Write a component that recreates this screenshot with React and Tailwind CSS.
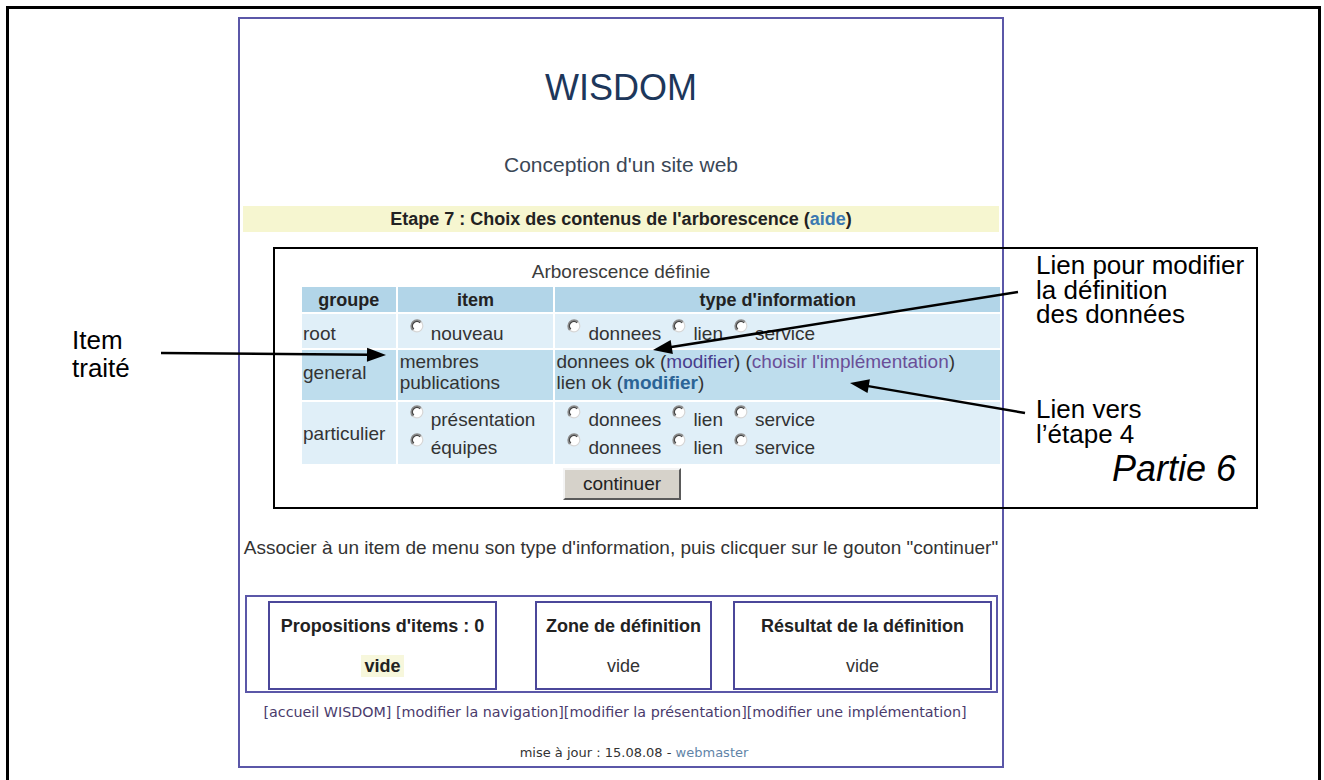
import React from "react";

const Radio = () => (
  <svg width="14" height="14" viewBox="0 0 14 14" className="inline-block ml-[11px] mr-[7px] align-[7px]">
    <circle cx="7" cy="7" r="6" fill="#ffffff" />
    <path d="M11.24 2.76 A6 6 0 0 0 2.76 11.24" fill="none" stroke="#8c8c8c" strokeWidth="1.6" />
    <path d="M10.2 3.8 A4.5 4.5 0 0 0 3.8 10.2" fill="none" stroke="#454545" strokeWidth="1.4" />
    <path d="M2.76 11.24 A6 6 0 0 0 11.24 2.76" fill="none" stroke="#d6d6d6" strokeWidth="1.2" />
  </svg>
);

function Arrow({ x1, y1, x2, y2 }) {
  const dx = x2 - x1;
  const dy = y2 - y1;
  const len = Math.hypot(dx, dy);
  const ux = dx / len;
  const uy = dy / len;
  const hl = 19;
  const hw = 7;
  const bx = x2 - ux * hl;
  const by = y2 - uy * hl;
  const px = -uy;
  const py = ux;
  return (
    <g>
      <line x1={x1} y1={y1} x2={bx + ux * 2} y2={by + uy * 2} stroke="#000" strokeWidth="2.5" />
      <polygon
        points={`${x2},${y2} ${bx + px * hw},${by + py * hw} ${bx - px * hw},${by - py * hw}`}
        fill="#000"
      />
    </g>
  );
}

export default function App() {
  return (
    <div className="relative w-[1324px] h-[780px] overflow-hidden bg-white font-['Liberation_Sans',Arial,sans-serif] text-[#333]">
      <div className="ml-[6px] mt-[6px] w-[1315px] h-[820px] border-[3px] border-b-0 border-black pl-[229px] pt-[8px]">
        <div className="w-[766px] h-[751px] border-2 border-[#5b57a8] bg-white flex flex-col">
          <div className="mt-[50.5px] h-[36px] leading-[36px] text-[36px] text-center text-[#1d375b]">WISDOM</div>
          <div className="mt-[47px] h-[24px] leading-[24px] text-[21px] text-center text-[#3a4756]">
            Conception d'un site web
          </div>
          <div className="mt-[29.6px] mx-[3px] h-[26px] leading-[26px] bg-[#f6f6d0] text-center text-[18px] font-bold text-[#222]">
            Etape 7 : Choix des contenus de l'arborescence (<span className="text-[#3b78b0]">aide</span>)
          </div>
          <div className="mt-[29.4px] h-[22px] leading-[22px] text-[19px] text-center text-[#3c3c3c]">
            Arborescence définie
          </div>
          <table className="mt-[1.6px] ml-[60px] border-separate border-spacing-[2px] text-[19px] text-[#333]">
            <tbody>
              <tr className="h-[25px] bg-[#b2d5e8]">
                <th className="w-[86px] p-0 align-middle leading-[20px] text-[18px] font-bold text-[#222]">groupe</th>
                <th className="w-[143px] p-0 align-middle leading-[20px] text-[18px] font-bold text-[#222]">item</th>
                <th className="w-[408px] p-0 align-middle leading-[20px] text-[18px] font-bold text-[#222]">type d'information</th>
              </tr>
              <tr className="h-[34px] bg-[#e0eff8]">
                <td className="px-[1px] pt-[5px] pb-0 align-top leading-[29px]">root</td>
                <td className="px-[1px] pt-[5px] pb-0 align-top leading-[29px] whitespace-nowrap">
                  <Radio />nouveau
                </td>
                <td className="px-[1px] pt-[5px] pb-0 align-top leading-[29px] whitespace-nowrap">
                  <Radio />donnees<Radio />lien<Radio />service
                </td>
              </tr>
              <tr className="h-[50px] bg-[#bedded]">
                <td className="px-[1px] pt-0 pb-[6px] align-middle leading-[21px]">general</td>
                <td className="px-[2px] pt-0 pb-[6px] align-middle leading-[21px]">
                  <div>membres</div>
                  <div>publications</div>
                </td>
                <td className="px-[1px] pt-0 pb-[6px] align-middle leading-[21px] whitespace-nowrap">
                  <div>
                    donnees ok (<span className="text-[#483d8e]">modifier</span>) (
                    <span className="text-[#6a4f98]">choisir l'implémentation</span>)
                  </div>
                  <div>
                    lien ok (<span className="text-[#2b6496] font-bold">modifier</span>)
                  </div>
                </td>
              </tr>
              <tr className="h-[62px] bg-[#e0eff8]">
                <td className="px-[1px] py-0 align-middle leading-[23px]">particulier</td>
                <td className="px-[1px] pt-[3px] pb-0 align-top leading-[27px] whitespace-nowrap">
                  <div>
                    <Radio />présentation
                  </div>
                  <div>
                    <Radio />équipes
                  </div>
                </td>
                <td className="px-[1px] pt-[3px] pb-0 align-top leading-[27px] whitespace-nowrap">
                  <div>
                    <Radio />donnees<Radio />lien<Radio />service
                  </div>
                  <div>
                    <Radio />donnees<Radio />lien<Radio />service
                  </div>
                </td>
              </tr>
            </tbody>
          </table>
          <div className="mt-[2px] ml-[323px] w-[118px] h-[32px] bg-[#d6d2ca] border-2 border-t-[#f4f4f4] border-l-[#f4f4f4] border-r-[#5a5a5a] border-b-[#5a5a5a] flex items-center justify-center text-[19px] text-[#222] leading-[22px]">
            continuer
          </div>
          <div className="mt-[36.6px] h-[22px] leading-[22px] text-[19px] text-center text-[#333] whitespace-nowrap">
            Associer à un item de menu son type d'information, puis clicquer sur le gouton "continuer"
          </div>
          <div className="mt-[36.4px] ml-[5px] w-[753px] h-[98px] border-2 border-[#5b57a8] flex items-start pt-[4px] pl-[21px]">
            <div className="w-[229px] h-[89px] border-2 border-[#4b479a] flex flex-col items-center pt-[11.5px]">
              <div className="h-[22px] leading-[22px] text-[18px] font-bold text-[#222] whitespace-nowrap">Propositions d'items : 0</div>
              <div className="mt-[18px] h-[22px] leading-[22px] text-[18px] font-bold text-[#222] bg-[#f7f7dc] px-[3px]">vide</div>
            </div>
            <div className="ml-[38px] w-[177px] h-[89px] border-2 border-[#4b479a] flex flex-col items-center pt-[11.5px]">
              <div className="h-[22px] leading-[22px] text-[18px] font-bold text-[#222] whitespace-nowrap">Zone de définition</div>
              <div className="mt-[18px] h-[22px] leading-[22px] text-[18px] text-[#333]">vide</div>
            </div>
            <div className="ml-[21px] w-[259px] h-[89px] border-2 border-[#4b479a] flex flex-col items-center pt-[11.5px]">
              <div className="h-[22px] leading-[22px] text-[18px] font-bold text-[#222] whitespace-nowrap">Résultat de la définition</div>
              <div className="mt-[18px] h-[22px] leading-[22px] text-[18px] text-[#333]">vide</div>
            </div>
          </div>
          <div className="mt-[11px] pr-[12px] h-[17px] leading-[17px] text-[14.3px] text-center text-[#4a3b6c] font-['DejaVu_Sans',Verdana,sans-serif] whitespace-nowrap">
            [accueil WISDOM] [modifier la navigation][modifier la présentation][modifier une implémentation]
          </div>
          <div className="mt-[23.5px] pl-[26px] h-[16px] leading-[16px] text-[13px] text-center text-[#333] font-['DejaVu_Sans',Verdana,sans-serif] whitespace-nowrap">
            mise à jour : 15.08.08 - <span className="text-[#5f84a8]">webmaster</span>
          </div>
        </div>
      </div>

      {/* annotations */}
      <div className="absolute left-[273px] top-[247px] w-[985px] h-[262px] border-2 border-black pointer-events-none"></div>
      <div className="absolute left-[72px] top-[326px] text-[26px] leading-[28px] text-black">
        <div>Item</div>
        <div>traité</div>
      </div>
      <div className="absolute left-[1036px] top-[253px] text-[26px] leading-[24.5px] text-black whitespace-nowrap">
        <div>Lien pour modifier</div>
        <div>la définition</div>
        <div>des données</div>
      </div>
      <div className="absolute left-[1036px] top-[397px] text-[26px] leading-[24.5px] text-black whitespace-nowrap">
        <div>Lien vers</div>
        <div>l’étape 4</div>
      </div>
      <div className="absolute left-[1112px] top-[448.5px] text-[36px] leading-[40px] italic text-black whitespace-nowrap">
        Partie 6
      </div>
      <svg className="absolute left-0 top-0 pointer-events-none" width="1324" height="780" viewBox="0 0 1324 780">
        <Arrow x1={161} y1={353} x2={386} y2={355} />
        <Arrow x1={1018} y1={292} x2={653} y2={350} />
        <Arrow x1={1025} y1={413} x2={850} y2={383} />
      </svg>
    </div>
  );
}
